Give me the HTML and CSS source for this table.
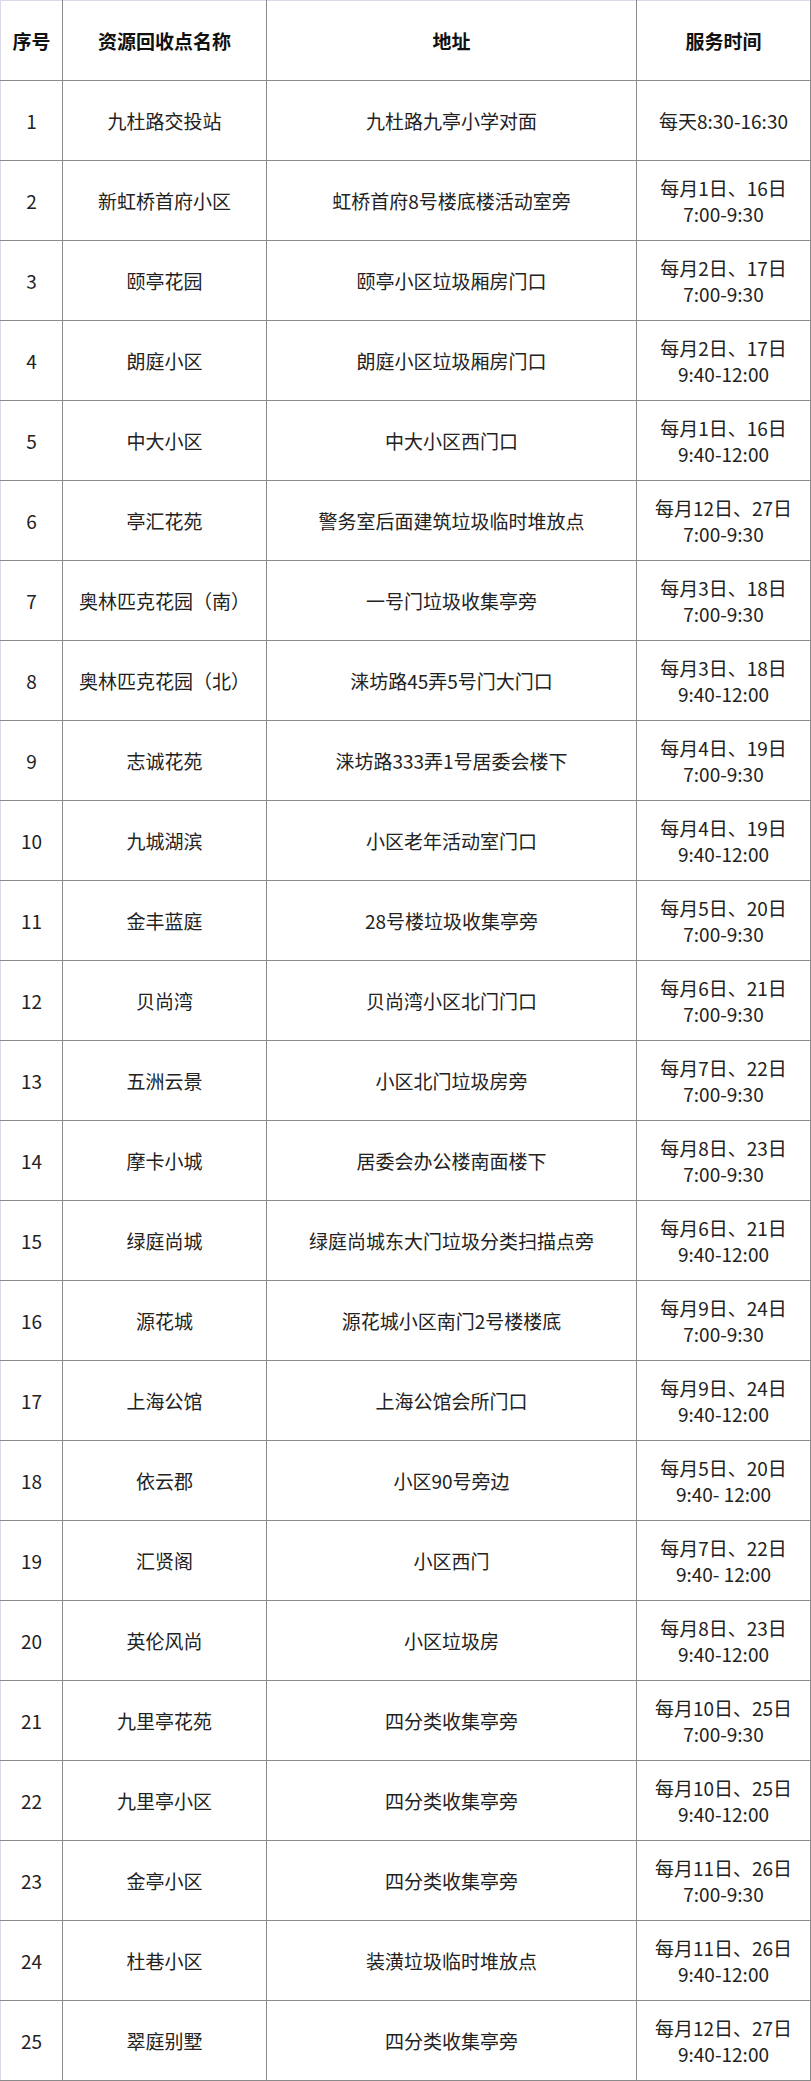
FILE: index.html
```html
<!DOCTYPE html>
<html lang="zh-CN">
<head>
<meta charset="utf-8">
<title>资源回收点</title>
<link rel="stylesheet" href="styles.css">
</head>
<body>
<table class="sched">
<colgroup>
<col class="c-no"><col class="c-name"><col class="c-addr"><col class="c-time">
</colgroup>
<thead>
<tr><th>序号</th><th>资源回收点名称</th><th>地址</th><th>服务时间</th></tr>
</thead>
<tbody>
<tr><td>1</td><td>九杜路交投站</td><td>九杜路九亭小学对面</td><td>每天8:30-16:30</td></tr>
<tr><td>2</td><td>新虹桥首府小区</td><td>虹桥首府8号楼底楼活动室旁</td><td>每月1日、16日<br>7:00-9:30</td></tr>
<tr><td>3</td><td>颐亭花园</td><td>颐亭小区垃圾厢房门口</td><td>每月2日、17日<br>7:00-9:30</td></tr>
<tr><td>4</td><td>朗庭小区</td><td>朗庭小区垃圾厢房门口</td><td>每月2日、17日<br>9:40-12:00</td></tr>
<tr><td>5</td><td>中大小区</td><td>中大小区西门口</td><td>每月1日、16日<br>9:40-12:00</td></tr>
<tr><td>6</td><td>亭汇花苑</td><td>警务室后面建筑垃圾临时堆放点</td><td>每月12日、27日<br>7:00-9:30</td></tr>
<tr><td>7</td><td>奥林匹克花园（南）</td><td>一号门垃圾收集亭旁</td><td>每月3日、18日<br>7:00-9:30</td></tr>
<tr><td>8</td><td>奥林匹克花园（北）</td><td>涞坊路45弄5号门大门口</td><td>每月3日、18日<br>9:40-12:00</td></tr>
<tr><td>9</td><td>志诚花苑</td><td>涞坊路333弄1号居委会楼下</td><td>每月4日、19日<br>7:00-9:30</td></tr>
<tr><td>10</td><td>九城湖滨</td><td>小区老年活动室门口</td><td>每月4日、19日<br>9:40-12:00</td></tr>
<tr><td>11</td><td>金丰蓝庭</td><td>28号楼垃圾收集亭旁</td><td>每月5日、20日<br>7:00-9:30</td></tr>
<tr><td>12</td><td>贝尚湾</td><td>贝尚湾小区北门门口</td><td>每月6日、21日<br>7:00-9:30</td></tr>
<tr><td>13</td><td>五洲云景</td><td>小区北门垃圾房旁</td><td>每月7日、22日<br>7:00-9:30</td></tr>
<tr><td>14</td><td>摩卡小城</td><td>居委会办公楼南面楼下</td><td>每月8日、23日<br>7:00-9:30</td></tr>
<tr><td>15</td><td>绿庭尚城</td><td>绿庭尚城东大门垃圾分类扫描点旁</td><td>每月6日、21日<br>9:40-12:00</td></tr>
<tr><td>16</td><td>源花城</td><td>源花城小区南门2号楼楼底</td><td>每月9日、24日<br>7:00-9:30</td></tr>
<tr><td>17</td><td>上海公馆</td><td>上海公馆会所门口</td><td>每月9日、24日<br>9:40-12:00</td></tr>
<tr><td>18</td><td>依云郡</td><td>小区90号旁边</td><td>每月5日、20日<br>9:40- 12:00</td></tr>
<tr><td>19</td><td>汇贤阁</td><td>小区西门</td><td>每月7日、22日<br>9:40- 12:00</td></tr>
<tr><td>20</td><td>英伦风尚</td><td>小区垃圾房</td><td>每月8日、23日<br>9:40-12:00</td></tr>
<tr><td>21</td><td>九里亭花苑</td><td>四分类收集亭旁</td><td>每月10日、25日<br>7:00-9:30</td></tr>
<tr><td>22</td><td>九里亭小区</td><td>四分类收集亭旁</td><td>每月10日、25日<br>9:40-12:00</td></tr>
<tr><td>23</td><td>金亭小区</td><td>四分类收集亭旁</td><td>每月11日、26日<br>7:00-9:30</td></tr>
<tr><td>24</td><td>杜巷小区</td><td>装潢垃圾临时堆放点</td><td>每月11日、26日<br>9:40-12:00</td></tr>
<tr><td>25</td><td>翠庭别墅</td><td>四分类收集亭旁</td><td>每月12日、27日<br>9:40-12:00</td></tr>
</tbody>
</table>
</body>
</html>
```
FILE: styles.css
```css
html, body {
  margin: 0;
  padding: 0;
  background: #ffffff;
}
body {
  font-family: "Noto Sans CJK SC", "Noto Sans", sans-serif;
  color: #222222;
}
.sched {
  border-collapse: collapse;
  table-layout: fixed;
  width: 810px;
}
.c-no { width: 62px; }
.c-name { width: 204px; }
.c-addr { width: 370px; }
.c-time { width: 174px; }
.sched th,
.sched td {
  border: 1px solid #8a8a8a;
  height: 80px;
  padding: 0;
  text-align: center;
  vertical-align: middle;
  font-size: 19px;
  line-height: 26px;
  box-sizing: border-box;
}
.sched th {
  font-weight: bold;
  color: #111111;
  border-top-color: #d9d9ea;
}
.sched th:first-child,
.sched td:first-child {
  border-left-color: #d9d9ea;
}
```
